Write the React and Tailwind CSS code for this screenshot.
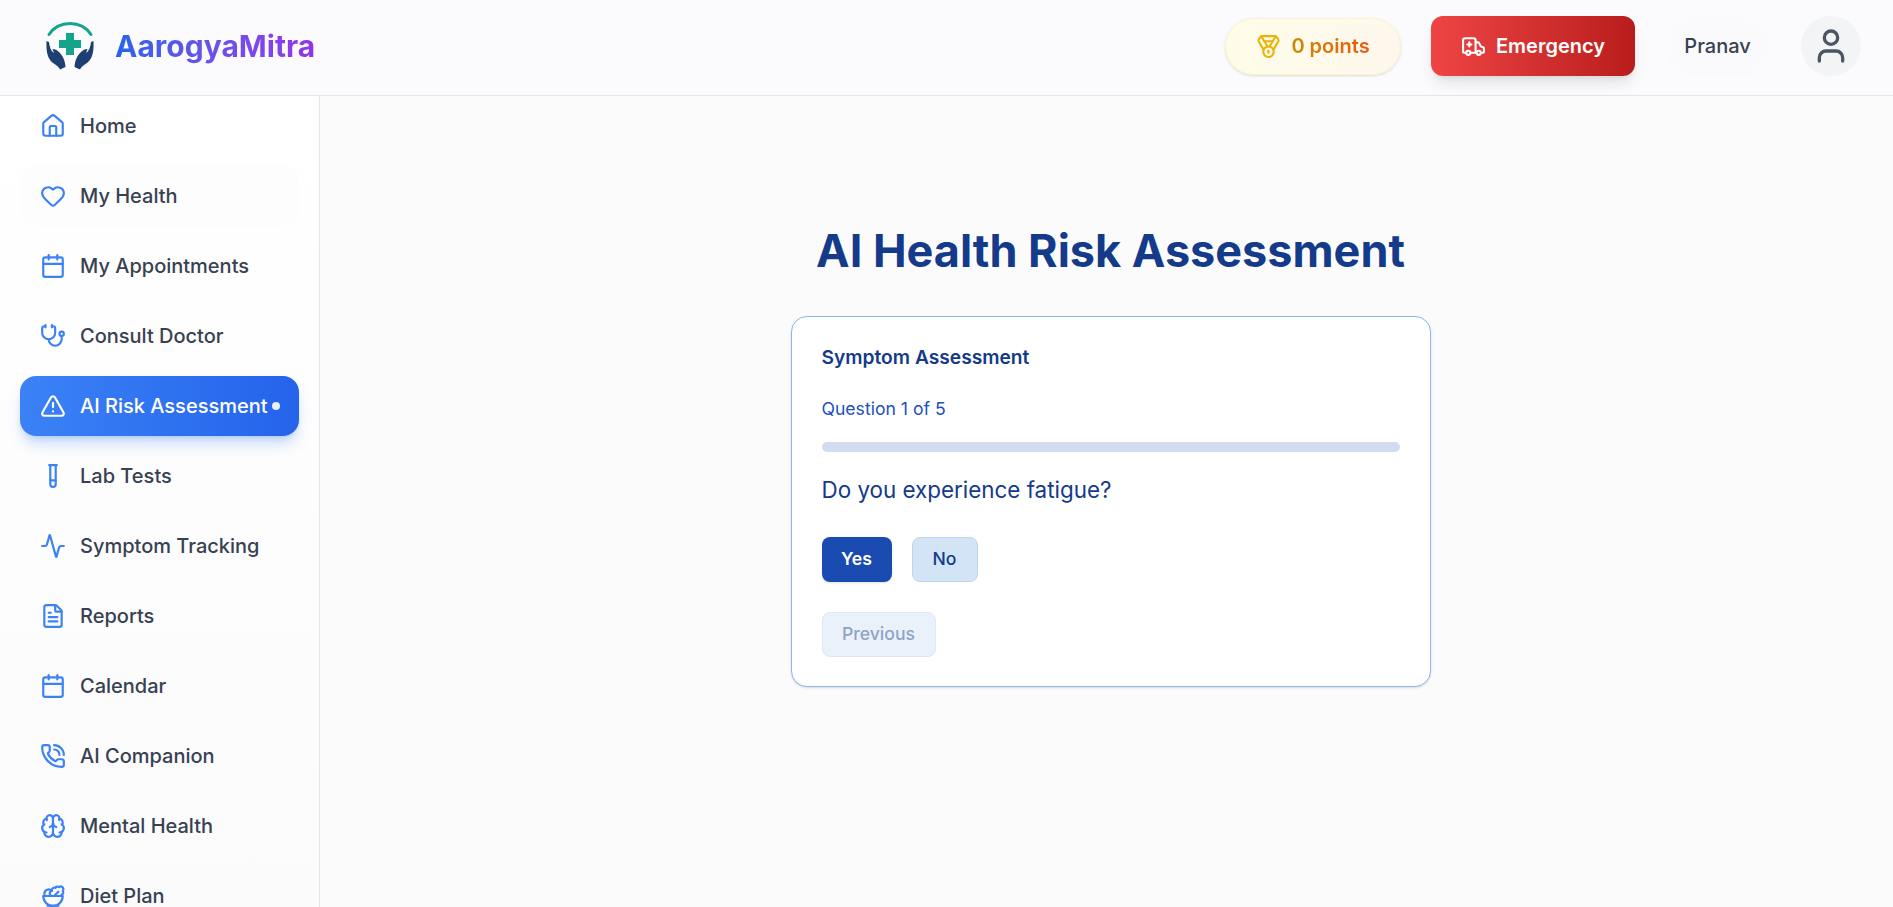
import React from 'react';
import {
    House, Heart, Calendar, Stethoscope, TriangleAlert, TestTube, Activity,
    FileText, PhoneCall, Brain, Salad, Medal, Ambulance, User,
} from 'lucide-react';

const navItems = [
    { label: 'Home', icon: House },
    { label: 'My Health', icon: Heart, soft: true },
    { label: 'My Appointments', icon: Calendar },
    { label: 'Consult Doctor', icon: Stethoscope },
    { label: 'AI Risk Assessment', icon: TriangleAlert, active: true },
    { label: 'Lab Tests', icon: TestTube },
    { label: 'Symptom Tracking', icon: Activity },
    { label: 'Reports', icon: FileText },
    { label: 'Calendar', icon: Calendar },
    { label: 'AI Companion', icon: PhoneCall },
    { label: 'Mental Health', icon: Brain },
    { label: 'Diet Plan', icon: Salad },
];

const handPath = 'M0.5 19 L3 20 C3.5 25 5 29 8 31 L6.5 27 C9 27 11 28 13 30 C16 33 19 37 19.5 45 L14 47.5 C13 45 10 43 7 41 C2 37 0 31 0.5 19 Z';

const Logo = () => (
    <svg width="48" height="48" viewBox="0 0 48 48" fill="none">
        <path d="M3 12.5 C8 5 15 1.5 24 1.5 C33 1.5 40 5 45 12.5" stroke="#14a38b" strokeWidth="3" strokeLinecap="round" />
        <path d="M20 11 h8 v7 h7 v8 h-7 v7 h-8 v-7 h-7 v-8 h7 z" fill="#14a38b" />
        <path d={handPath} fill="#1d3f72" />
        <g transform="translate(48 0) scale(-1 1)">
            <path d={handPath} fill="#1d3f72" />
        </g>
    </svg>
);

const Header = () => (
    <header className="h-24 shrink-0 flex items-center justify-between pl-[46px] pr-[32px] pb-[3px] bg-[#fbfbfe] border-b border-[#e4e6ee]">
        <div className="flex items-center gap-[21px]">
            <Logo />
            <span className="text-[30px] font-bold bg-gradient-to-r from-[#2563eb] to-[#9333ea] bg-clip-text text-transparent">AarogyaMitra</span>
        </div>
        <div className="flex items-center">
            <div className="w-[176px] h-[57px] flex items-center justify-center gap-2.5 rounded-full border border-[#fef3c7] bg-gradient-to-r from-[#fefce8] to-[#fff7ed] shadow-sm">
                <Medal size={25} className="text-[#eab308]" />
                <span className="text-xl font-semibold bg-gradient-to-r from-[#ca8a04] to-[#ea580c] bg-clip-text text-transparent">0 points</span>
            </div>
            <button className="ml-[30px] w-[204px] h-[60px] flex items-center justify-center gap-2.5 rounded-xl text-white text-xl font-semibold bg-gradient-to-r from-[#ef4444] to-[#b91c1c] shadow-lg">
                <Ambulance size={25} />
                Emergency
            </button>
            <div className="ml-[30px] w-[105px] h-[60px] flex items-center justify-center rounded-full text-xl font-medium text-[#374151] bg-[#fafafc]">Pranav</div>
            <div className="ml-[31px] w-[60px] h-[60px] flex items-center justify-center rounded-full bg-[#f3f4f6]">
                <User size={40} className="text-[#4b5563]" />
            </div>
        </div>
    </header>
);

const Sidebar = () => (
    <aside className="w-[320px] shrink-0 px-5 flex flex-col gap-2.5 overflow-hidden bg-gradient-to-b from-white to-[#fbfbfc] border-r border-[#e4e6ee]">
        {navItems.map((item) => {
            const Icon = item.icon;
            return (
                <div
                    key={item.label}
                    className={item.active
                        ? 'h-[60px] shrink-0 flex items-center gap-[14px] px-5 rounded-2xl text-white text-xl font-medium bg-gradient-to-r from-[#3b82f6] to-[#2563eb] shadow-lg shadow-[#3b82f6]/30'
                        : item.soft
                            ? 'h-[60px] shrink-0 flex items-center gap-[14px] px-5 rounded-2xl text-[#374151] text-xl font-medium bg-[#fdfdfe]'
                            : 'h-[60px] shrink-0 flex items-center gap-[14px] px-5 rounded-2xl text-[#374151] text-xl font-medium'}
                >
                    <Icon size={26} className={item.active ? 'shrink-0 text-white' : 'shrink-0 text-[#3b82f6]'} />
                    <span className="whitespace-nowrap">{item.label}</span>
                    {item.active && <span className="-ml-[10px] shrink-0 w-2 h-2 rounded-full bg-white/90" />}
                </div>
            );
        })}
    </aside>
);

const Assessment = () => (
    <main className="flex-1 flex flex-col items-center pl-2 bg-[#fbfbfc]">
        <h1 className="mt-[122px] text-[45px] leading-[66px] font-bold text-[#143a8a]">AI Health Risk Assessment</h1>
        <div className="mt-[32px] w-[640px] h-[371px] px-[30px] pt-[29px] rounded-2xl border border-[#8ab8ec] bg-white shadow-sm">
            <h2 className="text-[19.2px] leading-[22px] font-semibold text-[#143a8a]">Symptom Assessment</h2>
            <p className="mt-[31px] text-[17.6px] leading-[20px] text-[#2050c0]">Question 1 of 5</p>
            <div className="mt-[23px] h-2.5 rounded-full bg-[#d1dcf0]" />
            <p className="mt-[24px] text-[22.4px] leading-[28px] text-[#143a8a]">Do you experience fatigue?</p>
            <div className="mt-[33px] flex gap-5">
                <button className="w-[70px] h-[45px] rounded-lg text-[17.6px] font-semibold text-white bg-[#1a4bb0] shadow-sm">Yes</button>
                <button className="w-[66px] h-[45px] rounded-lg text-[17.6px] font-medium text-[#143a8a] bg-[#d3e4f6] border border-[#bcd6f0]">No</button>
            </div>
            <button className="mt-[30px] block w-[114px] h-[45px] rounded-lg text-[17.6px] font-medium text-[#8fa3c9] bg-[#e9f1fa] border border-[#dde9f6]">Previous</button>
        </div>
    </main>
);

const App = () => {
    return (
        <div className="h-screen flex flex-col overflow-hidden font-['Inter',sans-serif]">
            <Header />
            <div className="flex-1 flex min-h-0">
                <Sidebar />
                <Assessment />
            </div>
        </div>
    );
};

export default App;
